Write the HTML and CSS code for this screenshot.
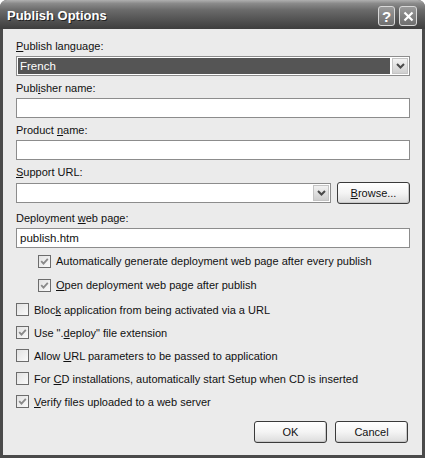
FILE: index.html
```html
<!DOCTYPE html>
<html>
<head>
<meta charset="utf-8">
<link rel="stylesheet" href="styles.css">
</head>
<body>
<div class="window">
  <div class="titlebar">
    <span class="title">Publish Options</span>
    <div class="tbtns">
      <span class="tbtn">?</span>
      <span class="tbtn">
        <svg width="11" height="11" viewBox="0 0 11 11"><path d="M1.5 1.5 L9.5 9.5 M9.5 1.5 L1.5 9.5" stroke="#fff" stroke-width="2.2" fill="none"/></svg>
      </span>
    </div>
  </div>
  <div class="content">
    <div class="field">
      <label class="lbl"><u>P</u>ublish language:</label>
      <div class="select">
        <div class="sel-value"><span>French</span></div>
        <span class="dd"><svg width="9" height="6" viewBox="0 0 9 6"><path d="M1 1 L4.5 4.5 L8 1" stroke="#4a4a4a" stroke-width="2" fill="none"/></svg></span>
      </div>
    </div>
    <div class="field">
      <label class="lbl">Publ<u>i</u>sher name:</label>
      <div class="input"></div>
    </div>
    <div class="field">
      <label class="lbl">Product <u>n</u>ame:</label>
      <div class="input"></div>
    </div>
    <div class="field">
      <label class="lbl"><u>S</u>upport URL:</label>
      <div class="url-row">
        <div class="select combo">
          <div class="combo-value"></div>
          <span class="dd"><svg width="9" height="6" viewBox="0 0 9 6"><path d="M1 1 L4.5 4.5 L8 1" stroke="#4a4a4a" stroke-width="2" fill="none"/></svg></span>
        </div>
        <button class="btn"><u>B</u>rowse...</button>
      </div>
    </div>
    <div class="field deploy">
      <label class="lbl">Deployment <u>w</u>eb page:</label>
      <div class="input"><span>publish.htm</span></div>
    </div>
    <div class="sub-checks">
      <div class="chk-row"><span class="cb on"><svg width="9" height="9" viewBox="0 0 9 9"><path d="M1.2 4.2 L3.5 6.7 L7.8 1.8" stroke="#8a8a8a" stroke-width="1.8" fill="none"/></svg></span><span>Automatically <u>g</u>enerate deployment web page after every publish</span></div>
      <div class="chk-row"><span class="cb on"><svg width="9" height="9" viewBox="0 0 9 9"><path d="M1.2 4.2 L3.5 6.7 L7.8 1.8" stroke="#8a8a8a" stroke-width="1.8" fill="none"/></svg></span><span><u>O</u>pen deployment web page after publish</span></div>
    </div>
    <div class="checks">
      <div class="chk-row"><span class="cb"></span><span>Bloc<u>k</u> application from being activated via a URL</span></div>
      <div class="chk-row"><span class="cb on"><svg width="9" height="9" viewBox="0 0 9 9"><path d="M1.2 4.2 L3.5 6.7 L7.8 1.8" stroke="#8a8a8a" stroke-width="1.8" fill="none"/></svg></span><span>Use ".<u>d</u>eploy" file extension</span></div>
      <div class="chk-row"><span class="cb"></span><span>Allow <u>U</u>RL parameters to be passed to application</span></div>
      <div class="chk-row"><span class="cb"></span><span>For <u>C</u>D installations, automatically start Setup when CD is inserted</span></div>
      <div class="chk-row"><span class="cb on"><svg width="9" height="9" viewBox="0 0 9 9"><path d="M1.2 4.2 L3.5 6.7 L7.8 1.8" stroke="#8a8a8a" stroke-width="1.8" fill="none"/></svg></span><span><u>V</u>erify files uploaded to a web server</span></div>
    </div>
    <div class="actions">
      <button class="btn ok">OK</button>
      <button class="btn">Cancel</button>
    </div>
  </div>
</div>
</body>
</html>
```

FILE: styles.css
```css
* { box-sizing: border-box; }
html, body { margin: 0; padding: 0; background: #fff; }
body { width: 425px; height: 458px; overflow: hidden; font-family: "Liberation Sans", Arial, sans-serif; font-size: 11px; color: #111; }
u { text-decoration: underline; text-underline-offset: 1px; }

.window {
  width: 425px; height: 458px;
  display: flex; flex-direction: column;
  border-radius: 7px 7px 0 0;
  background: #4a4a4a;
  overflow: hidden;
}
.titlebar {
  height: 29px; flex: none;
  display: flex; align-items: center; justify-content: space-between;
  padding: 0 8px 0 7px;
  background: linear-gradient(to bottom, #b0b0b0 0%, #8a8a8a 12%, #6a6a6a 35%, #555 65%, #3e3e3e 100%);
}
.title {
  font-family: "Liberation Sans", Arial, sans-serif;
  font-weight: bold; font-size: 13px; color: #fff;
  text-shadow: 1px 1px 0 #222;
  margin-top: 1px;
}
.tbtns { display: flex; gap: 4px; margin-top: 3px; }
.tbtn {
  width: 17px; height: 20px;
  display: flex; align-items: center; justify-content: center;
  border: 1px solid #d8d8d8; border-radius: 3px;
  background: linear-gradient(to bottom, #9a9a9a, #6e6e6e);
  color: #fff; font-weight: bold; font-size: 15px; font-family: "Liberation Sans", Arial, sans-serif;
}
.tbtn:last-child { width: 18px; }

.content {
  flex: 1;
  margin: 0 3px 3px 3px;
  background: #ebebeb;
  padding: 11px 12px 0 13px;
  display: flex; flex-direction: column;
}
.field { display: flex; flex-direction: column; gap: 3px; margin-bottom: 6px; }
.field.deploy { margin-top: 2px; }
.lbl { line-height: 13px; height: 13px; }

.select {
  height: 20px; display: flex;
  border: 1px solid #8c8c8c; background: #fff;
  padding: 1px;
}
.sel-value {
  flex: 1; background: #555; color: #fff;
  display: flex; align-items: center; padding-left: 2px;
  margin-right: 2px; font-size: 11.5px;
}
.dd {
  width: 16px; flex: none;
  display: flex; align-items: center; justify-content: center;
  background: linear-gradient(to bottom, #f2f2f2, #cfcfcf);
  border: 1px solid #c4c4c4;
}
.input {
  height: 20px; border: 1px solid #8c8c8c; background: #fff;
  display: flex; align-items: center; padding-left: 3px;
  font-size: 11.5px;
}
.url-row { display: flex; gap: 6px; align-items: center; }
.combo { flex: 1; height: 20px; }
.combo-value { flex: 1; }

.btn {
  width: 73px; height: 22px;
  font-family: "Liberation Sans", Arial, sans-serif; font-size: 11px; color: #111;
  border: 1px solid #3a3a3a; border-radius: 3px;
  background: linear-gradient(to bottom, #ffffff 0%, #f4f4f4 50%, #dcdcdc 100%);
  box-shadow: inset -1px -1px 0 #c8c8c8;
  padding: 0;
}
.sub-checks { display: flex; flex-direction: column; padding-left: 22px; margin-top: -5px; }
.checks { display: flex; flex-direction: column; margin-top: 1px; }
.sub-checks .chk-row { height: 24px; }
.checks .chk-row { height: 23px; }
.chk-row { display: flex; align-items: center; gap: 5px; }
.cb {
  width: 13px; height: 13px; flex: none;
  border: 1px solid #6c6c6c;
  background: linear-gradient(135deg, #e2e2e2, #fafafa);
  display: flex; align-items: center; justify-content: center;
}
.actions { display: flex; justify-content: flex-end; gap: 8px; margin-top: 8px; padding-right: 2px; }
```
